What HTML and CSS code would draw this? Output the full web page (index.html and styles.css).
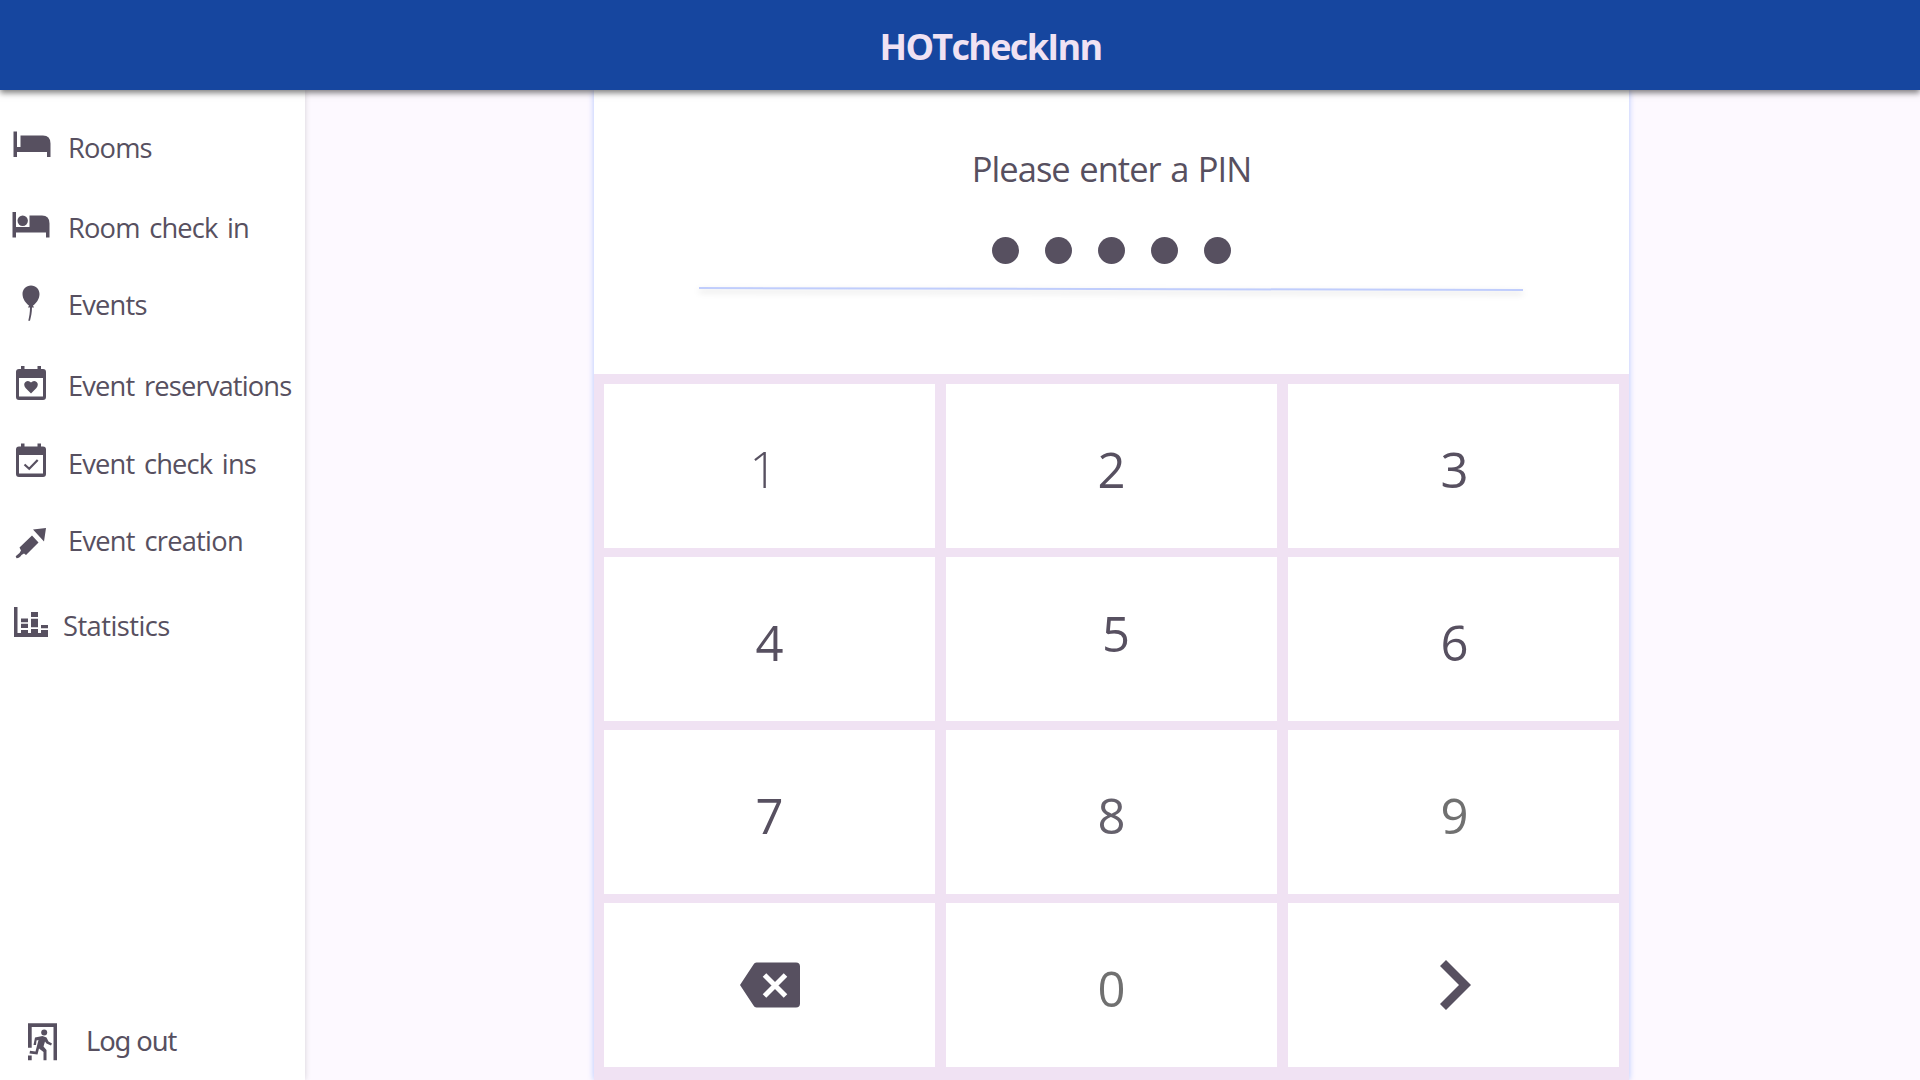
FILE: index.html
```html
<!DOCTYPE html>
<html lang="en">
<head>
<meta charset="utf-8">
<title>HOTcheckInn</title>
<link rel="stylesheet" href="styles.css">
</head>
<body>
<header class="topbar"><h1 class="brand">HOTcheckInn</h1></header>
<div class="layout">
  <nav class="sidebar">
    <a class="item rooms"><svg class="icon" viewBox="0 0 68 60"><path d="M13.500 14.500h3.500v15.500h3.500V18.500H43q7.500 0 7.500 8V40H47V35H17v5h-3.500z"/></svg><span class="label">Rooms</span></a>
    <a class="item room-check"><svg class="icon" viewBox="0 0 68 60"><path d="M12.500 16h3.500v15h13.500V19.500H42q7.500 0 7.500 8V41.500H46V36.500H16v5h-3.500z"/><circle cx="22.700" cy="24.700" r="5.200"/></svg><span class="label">Room check in</span></a>
    <a class="item events"><svg class="icon" viewBox="0 0 68 60"><path d="M31 11.500c5 0 8.500 3.700 8.500 8.500 0 5-3.500 9.500-6.500 11.500l1 2h-2c0 5-1 9-2 13.300h-1.700c1-4.300 1.700-8.300 1.700-13.300h-2l1-2c-3-2-6.500-6.500-6.500-11.500 0-4.800 3.500-8.500 8.500-8.500z"/></svg><span class="label">Events</span></a>
    <a class="item reservations"><svg class="icon" viewBox="0 0 68 60"><path fill-rule="evenodd" d="M21 11h3.500v3h13v-3H41v3h2q3 0 3 3v25q0 3-3 3H19q-3 0-3-3V17q0-3 3-3h2zM19 23v18.500h24V23z"/><path d="M31 38.500l-5.200-5.200q-3-3.600-.4-6.200 2.900-2.300 5.600.5 2.700-2.800 5.600-.5 2.600 2.600-.4 6.200z"/></svg><span class="label">Event reservations</span></a>
    <a class="item check-ins"><svg class="icon" viewBox="0 0 68 60"><path fill-rule="evenodd" d="M21 10.500h3.500v3h13v-3H41v3h2q3 0 3 3V41q0 3-3 3H19q-3 0-3-3V16.500q0-3 3-3h2zM19 22v18.500h24V22z"/><path class="stroke" d="M24.500 31.500l4.700 4.200 8.500-8.800"/></svg><span class="label">Event check ins</span></a>
    <a class="item creation"><svg class="icon" viewBox="0 0 68 60"><path d="M46 18l-2 13.500L33 19.500zM32 25.500l6.500 7L26 45l-2-1.500-2.500 1.500q-1.500 3-5 3.200l-.8-2 3.800-3.200 1.500-2.500-1.500-3z"/></svg><span class="label">Event creation</span></a>
    <a class="item statistics"><svg class="icon" viewBox="0 0 63 60"><path d="M14 12h3.500v26H21v-3h7v3h3v-4h7v4h3v-3h7v7H14zM21 23.500h7v3.700h-7zM21 28.700h7v4.300h-7zM31 17h7v5h-7zM31 23.700h7v8.500h-7zM41 30h7v3.300h-7z"/></svg><span class="label">Statistics</span></a>
    <a class="item logout"><svg class="icon" viewBox="0 0 86 60"><path d="M28 13.300h29v37h-3.500V17H31.700v20.800H28zM28 45.500h3.700v4.800H28z"/><circle cx="44.200" cy="22.500" r="3"/><path d="M35 27.500l7.500-1.500 4 1.500 2 4 3.500 2-1 2-4.500-2-1.500-2-1.500 5 3 3.500V50.300h-3V42l-4.500-3.500-1.500 6-8-1 .5-2.800 5.500.8 3-11.500-2 .5-.5 4.500h-2.500z"/></svg><span class="label">Log out</span></a>
  </nav>
  <main class="stage">
    <section class="panel">
      <div class="entry">
        <h2 class="prompt">Please enter a PIN</h2>
        <div class="dots"><i class="dot"></i><i class="dot"></i><i class="dot"></i><i class="dot"></i><i class="dot"></i></div>
        <svg class="rule" viewBox="0 0 824 6"><path d="M0 2L824 4"/></svg>
      </div>
      <div class="keypad">
        <button class="key one"><span>1</span></button><button class="key">2</button><button class="key last">3</button>
        <button class="key">4</button><button class="key five"><span>5</span></button><button class="key last">6</button>
        <button class="key">7</button><button class="key eight">8</button><button class="key gray last">9</button>
        <button class="key" aria-label="Delete"><svg class="delete" viewBox="0 0 60 46"><path d="M16.500.5H56q4 0 4 4v37q0 4-4 4H16.500q-2 0-3-2L0 23 13.500 2.500q1-2 3-2z"/><path class="cross" d="M24.500 13l21 21M45.500 13l-21 21"/></svg></button>
        <button class="key gray">0</button>
        <button class="key last" aria-label="Confirm"><svg class="next" viewBox="0 0 31 50"><path d="M6 0l25 25L6 50l-6-6 19-19L0 6z"/></svg></button>
      </div>
    </section>
  </main>
</div>
</body>
</html>
```
FILE: styles.css
```css
* { box-sizing: border-box; }
body {
  margin: 0;
  height: 1080px;
  overflow: hidden;
  display: flex;
  flex-direction: column;
  background: #fdf9ff;
  color: #575060;
  font-family: "Open Sans", "Noto Sans", sans-serif;
}
.topbar {
  position: relative;
  z-index: 2;
  flex: 0 0 90px;
  height: 90px;
  display: flex;
  justify-content: center;
  padding: 2px 0 0 61px;
  background: #16469f;
  box-shadow: 0 3px 6px rgba(0, 0, 0, .5);
}
.brand {
  margin: 0;
  color: #f0e2f3;
  font-size: 36px;
  line-height: 88px;
  height: 88px;
  padding-top: 1px;
  letter-spacing: -1.7px;
}
.layout { flex: 1; display: flex; min-height: 0; }
.sidebar {
  flex: 0 0 305px;
  display: flex;
  flex-direction: column;
  padding: 27px 0 10px;
  background: #fff;
  box-shadow: 0 0 6px rgba(0, 0, 0, .16);
}
.item {
  flex: 0 0 60px;
  height: 60px;
  display: flex;
  font-size: 27.3px;
  white-space: nowrap;
}
.icon { flex: none; height: 60px; fill: #575060; }
.stroke { fill: none; stroke: #575060; stroke-width: 2.2; }
.label { line-height: 62px; letter-spacing: -.84px; word-spacing: 3.3px; }
.room-check { margin-top: 19px; }
.room-check .label { line-height: 64px; }
.events { margin-top: 18px; }
.reservations { margin-top: 21px; }
.check-ins { margin-top: 18px; }
.creation { margin-top: 17px; }
.creation .label { letter-spacing: -.76px; }
.statistics { margin-top: 25px; }
.statistics .label { letter-spacing: -.55px; }
.logout { margin-top: auto; }
.logout .label { font-family: "Noto Sans", sans-serif; letter-spacing: -1.1px; word-spacing: 0; }
.stage { flex: 1; padding-left: 289px; }
.panel {
  width: 1035px;
  height: 990px;
  display: flex;
  flex-direction: column;
  background: #fff;
  box-shadow: 0 0 6px rgba(160, 185, 255, .8);
}
.entry {
  height: 284px;
  display: flex;
  flex-direction: column;
  align-items: center;
}
.prompt {
  margin: 49px 0 0;
  font-size: 34.5px;
  font-weight: 400;
  line-height: 60px;
  letter-spacing: -.95px;
  word-spacing: 1.4px;
}
.dots { display: flex; gap: 26px; margin-top: 38px; }
.dot { width: 27px; height: 27px; border-radius: 50%; background: #575060; }
.rule {
  width: 824px;
  height: 6px;
  margin: 21.5px 1px 0 0;
  overflow: visible;
  fill: none;
  stroke: #c0cdfc;
  stroke-width: 2;
  filter: drop-shadow(0 3px 3px rgba(0, 0, 0, .16));
}
.keypad {
  flex: 1;
  display: grid;
  grid-template-columns: repeat(3, 331px);
  grid-auto-rows: 164px;
  gap: 9px 11px;
  padding: 10px;
  background: #f0e2f3;
}
.key {
  display: flex;
  justify-content: center;
  align-items: center;
  border: 0;
  padding: 7px 0 0;
  background: #fff;
  color: #575060;
  font: 400 49px/1 "Open Sans", "Noto Sans", sans-serif;
}
.key svg { fill: #575060; }
.one { font-weight: 350; padding-right: 12px; }
.last { padding-left: 2px; }
.five { padding: 0 0 11px 9px; }
.eight { color: #65616c; }
.gray { color: #707070; }
.delete { width: 60px; height: 46px; margin-top: -7px; }
.cross { stroke: #fff; stroke-width: 5; }
.next { width: 31px; height: 50px; margin: -7px 0 0 1px; }
```
